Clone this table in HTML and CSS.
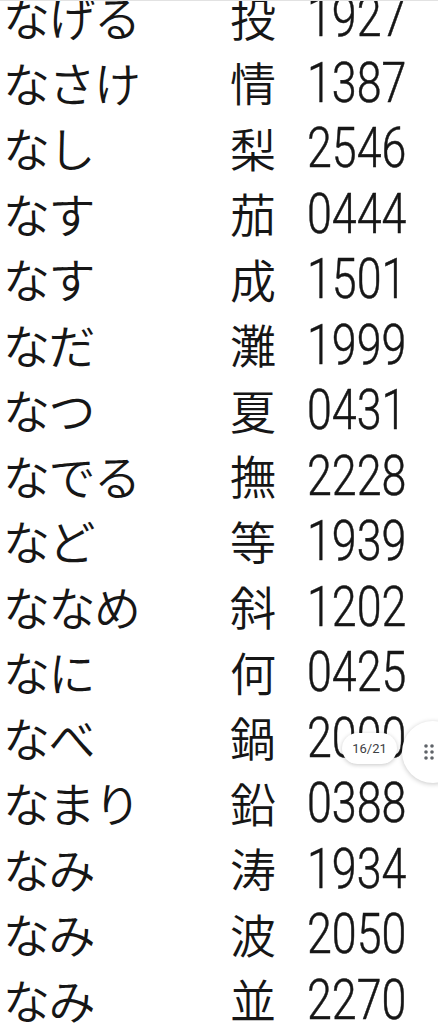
FILE: index.html
```html
<!DOCTYPE html>
<html lang="ja">
<head>
<meta charset="utf-8">
<title>なげる – なみ</title>
<link rel="stylesheet" href="styles.css">
</head>
<body>
<div class="page">
  <ul class="list">
    <li class="row"><span class="kana">なげる</span><span class="kanji">投</span><span class="num">1927</span></li>
    <li class="row"><span class="kana">なさけ</span><span class="kanji">情</span><span class="num">1387</span></li>
    <li class="row"><span class="kana">なし</span><span class="kanji">梨</span><span class="num">2546</span></li>
    <li class="row"><span class="kana">なす</span><span class="kanji">茄</span><span class="num">0444</span></li>
    <li class="row"><span class="kana">なす</span><span class="kanji">成</span><span class="num">1501</span></li>
    <li class="row"><span class="kana">なだ</span><span class="kanji">灘</span><span class="num">1999</span></li>
    <li class="row"><span class="kana">なつ</span><span class="kanji">夏</span><span class="num">0431</span></li>
    <li class="row"><span class="kana">なでる</span><span class="kanji">撫</span><span class="num">2228</span></li>
    <li class="row"><span class="kana">など</span><span class="kanji">等</span><span class="num">1939</span></li>
    <li class="row"><span class="kana">ななめ</span><span class="kanji">斜</span><span class="num">1202</span></li>
    <li class="row"><span class="kana">なに</span><span class="kanji">何</span><span class="num">0425</span></li>
    <li class="row"><span class="kana">なべ</span><span class="kanji">鍋</span><span class="num">2000</span></li>
    <li class="row"><span class="kana">なまり</span><span class="kanji">鉛</span><span class="num">0388</span></li>
    <li class="row"><span class="kana">なみ</span><span class="kanji">涛</span><span class="num">1934</span></li>
    <li class="row"><span class="kana">なみ</span><span class="kanji">波</span><span class="num">2050</span></li>
    <li class="row"><span class="kana">なみ</span><span class="kanji">並</span><span class="num">2270</span></li>
  </ul>
  <div class="badge">16/21</div>
  <div class="grip">
    <svg width="10" height="16" viewBox="0 0 10 16" aria-hidden="true">
      <circle cx="2" cy="2" r="1.8" fill="#5f6368"/>
      <circle cx="8" cy="2" r="1.8" fill="#5f6368"/>
      <circle cx="2" cy="8" r="1.8" fill="#5f6368"/>
      <circle cx="8" cy="8" r="1.8" fill="#5f6368"/>
      <circle cx="2" cy="14" r="1.8" fill="#5f6368"/>
      <circle cx="8" cy="14" r="1.8" fill="#5f6368"/>
    </svg>
  </div>
</div>
</body>
</html>
```
FILE: styles.css
```css
html, body {
  margin: 0;
  padding: 0;
  background: #ffffff;
}
body {
  width: 438px;
  height: 1024px;
  overflow: hidden;
}
.page {
  position: relative;
  width: 438px;
  height: 1024px;
  overflow: hidden;
  color: #161616;
  border-top: 1px solid #e2e2e2;
  box-sizing: border-box;
}
.list {
  list-style: none;
  margin: -18px 0 0 0;
  padding: 0 0 0 3px;
}
.row {
  display: grid;
  grid-template-columns: 227px 77px auto;
  align-items: center;
  height: 65.5px;
}
.kana {
  font-family: "Noto Sans CJK JP", sans-serif;
  font-weight: 350;
  font-size: 47px;
  line-height: 1;
  letter-spacing: -1.5px;
}
.kanji {
  font-family: "Noto Sans CJK JP", sans-serif;
  font-weight: 350;
  font-size: 46px;
  line-height: 1;
}
.num {
  display: inline-block;
  font-family: Roboto, "Liberation Sans", sans-serif;
  font-weight: 300;
  font-size: 56px;
  line-height: 1;
  -webkit-text-stroke: 0.5px #161616;
  transform: scaleX(0.8);
  transform-origin: left center;
  margin-top: 3px;
}
.badge {
  position: absolute;
  left: 342px;
  top: 732px;
  width: 55px;
  height: 31px;
  border-radius: 16px;
  background: #ffffff;
  box-shadow: 0 1px 4px rgba(0, 0, 0, 0.22);
  display: flex;
  align-items: center;
  justify-content: center;
  font-family: Roboto, "Liberation Sans", sans-serif;
  font-size: 13px;
  color: #3c4043;
}
.grip {
  position: absolute;
  left: 402px;
  top: 720px;
  width: 62px;
  height: 62px;
  border-radius: 50%;
  background: #ffffff;
  box-shadow: 0 1px 5px rgba(0, 0, 0, 0.22);
  display: flex;
  align-items: center;
  padding-left: 22px;
  box-sizing: border-box;
}
```
